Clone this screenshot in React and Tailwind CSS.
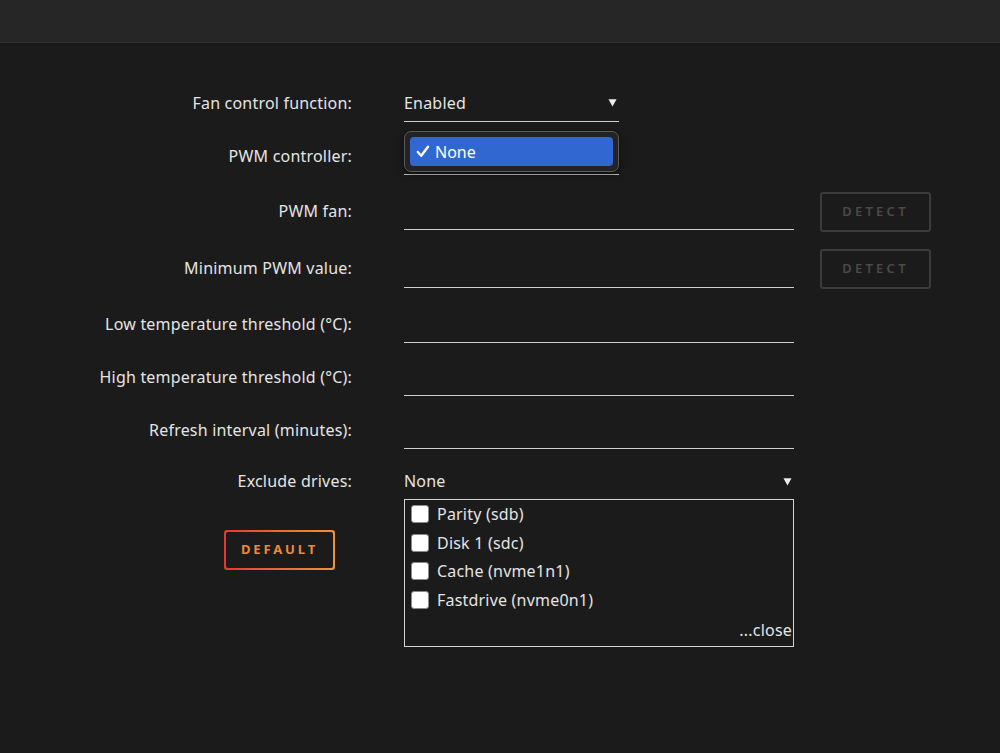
import React from "react";

const font = { fontFamily: '"Noto Sans", "Open Sans", sans-serif' };

function Label({ children }) {
  return (
    <div className="w-[352px] shrink-0 h-[38px] flex items-center justify-end text-[16px] tracking-[0.2px] text-[#e4e4e4]">
      {children}
    </div>
  );
}

function TextField() {
  return <div className="w-[390px] h-[38px] border-b border-[#cfcfcf]" />;
}

function DetectButton() {
  return (
    <button className="ml-[26px] w-[111px] h-[40px] rounded-[3px] border-2 border-[#3b3b3b] text-[13px] font-semibold tracking-[0.25em] text-[#4a4a4a]">
      DETECT
    </button>
  );
}

function Caret() {
  return (
    <svg width="9" height="9" viewBox="0 0 10 10" className="fill-[#ececec]">
      <path d="M0.5 1.5 H9.5 L5 9.5 Z" />
    </svg>
  );
}

const drives = ["Parity (sdb)", "Disk 1 (sdc)", "Cache (nvme1n1)", "Fastdrive (nvme0n1)"];

export default function App() {
  return (
    <div className="min-h-[753px] w-full bg-[#1c1b1c]" style={font}>
      <div className="h-[43px] bg-[#262626] border-b border-[#2f2f2f]" />

      <div className="flex flex-col">
        {/* Fan control function */}
        <div className="flex items-start mt-[41px]">
          <Label>Fan control function:</Label>
          <div className="ml-[52px] w-[215px] h-[38px] border-b border-[#cfcfcf] flex items-center justify-between text-[16px] tracking-[0.2px] text-[#e4e4e4] pr-[2px]">
            <span>Enabled</span>
            <Caret />
          </div>
        </div>

        {/* PWM controller with its open option list */}
        <div className="flex items-start mt-[15px]">
          <Label>PWM controller:</Label>
          <div className="relative ml-[52px] w-[215px] h-[38px] border-b border-[#cfcfcf]">
            <div className="absolute left-0 top-[-6px] w-[215px] h-[41px] rounded-[7px] border border-[#5a5a5a] bg-[#232323] shadow-[0_2px_6px_rgba(0,0,0,0.6)] p-[5px]">
              <div className="h-[29px] rounded-[4px] bg-[#3167d1] flex items-center pl-[6px] text-[16px] text-white gap-[5px]">
                <svg width="14" height="13" viewBox="0 0 14 13" fill="none" stroke="white" strokeWidth="2.4" strokeLinecap="round" strokeLinejoin="round">
                  <path d="M1.8 7 L5.2 10.8 L12 1.8" />
                </svg>
                <span>None</span>
              </div>
            </div>
          </div>
        </div>

        {/* PWM fan */}
        <div className="flex items-start mt-[17px]">
          <Label>PWM fan:</Label>
          <div className="ml-[52px]">
            <TextField />
          </div>
          <DetectButton />
        </div>

        {/* Minimum PWM value */}
        <div className="flex items-start mt-[17px]">
          <Label>Minimum PWM value:</Label>
          <div className="ml-[52px] pt-px">
            <TextField />
          </div>
          <DetectButton />
        </div>

        <div className="flex items-start mt-[16px]">
          <Label>Low temperature threshold (°C):</Label>
          <div className="ml-[52px]">
            <TextField />
          </div>
        </div>

        <div className="flex items-start mt-[15px]">
          <Label>High temperature threshold (°C):</Label>
          <div className="ml-[52px]">
            <TextField />
          </div>
        </div>

        <div className="flex items-start mt-[15px]">
          <Label>Refresh interval (minutes):</Label>
          <div className="ml-[52px]">
            <TextField />
          </div>
        </div>

        {/* Exclude drives multi-select */}
        <div className="flex items-start mt-[14px]">
          <div className="w-[352px] shrink-0 h-[36px] flex items-center justify-end text-[16px] tracking-[0.2px] text-[#e4e4e4]">
            Exclude drives:
          </div>
          <div className="ml-[52px] w-[390px] h-[36px] flex items-center justify-between text-[16px] tracking-[0.2px] text-[#e4e4e4] pr-[2px]">
            <span>None</span>
            <Caret />
          </div>
        </div>

        <div className="flex items-start">
          <div className="w-[352px] shrink-0 flex justify-end pr-[17px] pt-[31px]">
            <button className="w-[111px] h-[40px] rounded-[3px] p-[2px] bg-gradient-to-r from-[#e03a2e] to-[#f0923a]">
              <span className="w-full h-full rounded-[2px] bg-[#1c1b1c] flex items-center justify-center text-[13px] font-bold tracking-[0.22em] text-[#ec8a36]">
                DEFAULT
              </span>
            </button>
          </div>
          <div className="ml-[52px] w-[390px] h-[148px] border border-[#d4d4d4] flex flex-col pl-[6px] text-[16px] tracking-[0.2px] text-[#e4e4e4]">
            {drives.map((d) => (
              <label key={d} className="h-[28.6px] flex items-center gap-[8px]">
                <span className="w-[18px] h-[18px] rounded-[3px] bg-white border border-[#8a8a8a]" />
                <span>{d}</span>
              </label>
            ))}
            <div className="mt-auto mb-[4px] self-end pr-[1px]">...close</div>
          </div>
        </div>
      </div>
    </div>
  );
}
